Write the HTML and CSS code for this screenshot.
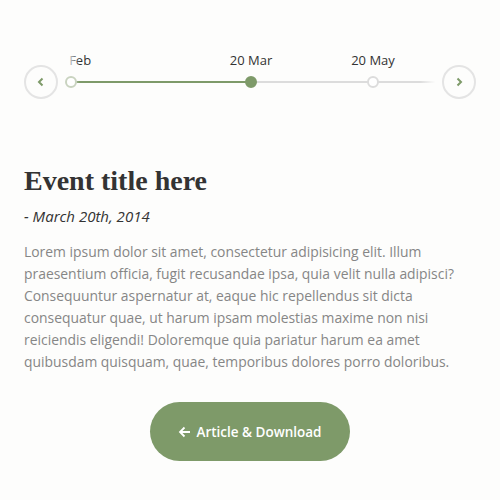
FILE: index.html
```html
<!DOCTYPE html>
<html>
<head>
<meta charset="utf-8">
<link rel="stylesheet" href="styles.css">
</head>
<body>
<div class="page">
  <div class="timeline">
    <button class="nav">
      <svg width="12" height="12" viewBox="0 0 12 12"><path d="M7.5 2.5 L4 6 L7.5 9.5" fill="none" stroke="#7e9a69" stroke-width="2"/></svg>
    </button>
    <div class="track">
      <div class="line line-done"></div>
      <div class="line line-rest"></div>
      <div class="fade fade-left"></div>
      <div class="fade fade-right"></div>
      <div class="event" style="left:13px"><span class="label">20 Feb</span><span class="dot faded"></span></div>
      <div class="event" style="left:193px"><span class="label">20 Mar</span><span class="dot active"></span></div>
      <div class="event" style="left:315px"><span class="label">20 May</span><span class="dot"></span></div>
    </div>
    <button class="nav">
      <svg width="12" height="12" viewBox="0 0 12 12"><path d="M4.5 2.5 L8 6 L4.5 9.5" fill="none" stroke="#7e9a69" stroke-width="2"/></svg>
    </button>
  </div>

  <h1 class="title">Event title here</h1>
  <p class="date">- March 20th, 2014</p>
  <p class="text">Lorem ipsum dolor sit amet, consectetur adipisicing elit. Illum<br>praesentium officia, fugit recusandae ipsa, quia velit nulla adipisci?<br>Consequuntur aspernatur at, eaque hic repellendus sit dicta<br>consequatur quae, ut harum ipsam molestias maxime non nisi<br>reiciendis eligendi! Doloremque quia pariatur harum ea amet<br>quibusdam quisquam, quae, temporibus dolores porro doloribus.</p>
  <div class="actions">
    <a class="btn"><svg class="arrow" width="13" height="12" viewBox="0 0 13 12"><path d="M12 6 H2 M6.5 1.5 L2 6 L6.5 10.5" fill="none" stroke="#fff" stroke-width="1.8"/></svg>Article &amp; Download</a>
  </div>
</div>
</body>
</html>
```
FILE: styles.css
```css
html, body {
  margin: 0;
  background: #fdfdfc;
}
body {
  font-family: "Open Sans", "Noto Sans", sans-serif;
}
.page {
  padding: 65px 24px 0;
}
.timeline {
  display: flex;
  align-items: center;
  height: 34px;
}
.nav {
  width: 34px;
  height: 34px;
  border-radius: 50%;
  border: 2px solid #e4e4e4;
  background: transparent;
  padding: 0;
  display: flex;
  align-items: center;
  justify-content: center;
  flex: none;
}
.track {
  position: relative;
  flex: 1;
  height: 34px;
  clip-path: inset(-30px 0 -10px 0);
}
.line {
  position: absolute;
  top: 16px;
  height: 2px;
}
.line-done {
  left: 13px;
  width: 180px;
  background: #7e9a69;
}
.line-rest {
  left: 193px;
  right: 0;
  background: #dcdcdc;
}
.event {
  position: absolute;
  top: 0;
  width: 0;
  height: 34px;
}
.label {
  position: absolute;
  bottom: 30px;
  left: 0;
  transform: translateX(-50%);
  white-space: nowrap;
  font-size: 13px;
  color: #333;
}
.fade {
  position: absolute;
  top: -30px;
  bottom: 0;
  z-index: 1;
}
.fade-left {
  left: 0;
  width: 22px;
  background: linear-gradient(to right, #fdfdfc 36%, rgba(253,253,252,0.45) 70%, rgba(253,253,252,0));
}
.fade-right {
  right: 0;
  width: 22px;
  background: linear-gradient(to left, #fdfdfc 30%, rgba(253,253,252,0));
}
.dot {
  position: absolute;
  z-index: 2;
  left: -6px;
  top: 11px;
  width: 8px;
  height: 8px;
  border: 2px solid #dcdcdc;
  border-radius: 50%;
  background: #fff;
}
.dot.faded {
  border-color: #c9d3c0;
}
.dot.active {
  background: #7e9a69;
  border-color: #7e9a69;
}
.title {
  font-family: "Liberation Serif", serif;
  font-weight: bold;
  font-size: 28px;
  line-height: 32px;
  color: #333;
  margin: 66px 0 0;
}
.date {
  font-style: italic;
  font-size: 15px;
  line-height: 20px;
  color: #333;
  margin: 9px 0 0;
}
.text {
  font-size: 13.9px;
  line-height: 22px;
  color: #868686;
  margin: 15px 0 0;
  white-space: nowrap;
}
.actions {
  display: flex;
  justify-content: center;
  margin-top: 29px;
}
.btn {
  display: flex;
  align-items: center;
  justify-content: center;
  gap: 5px;
  width: 200px;
  height: 59px;
  border-radius: 30px;
  background: #7e9a69;
  color: #fff;
  font-weight: 600;
  font-size: 13.5px;
}
.arrow {
  flex: none;
  margin-top: 1px;
}
```
